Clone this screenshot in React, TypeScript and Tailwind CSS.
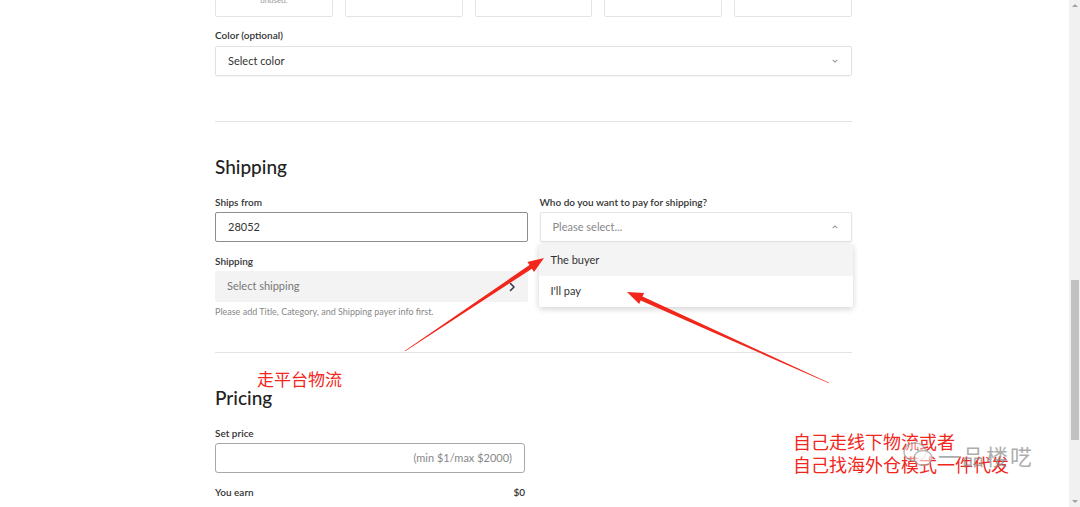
import React from 'react';

const UI_FONT = "font-['Lato','Noto_Sans',sans-serif]";

function ChevronDown() {
  return (
    <svg className="h-[8px] w-[8px] text-[#9a9a9a]" viewBox="0 0 10 10" fill="none" stroke="currentColor" strokeWidth={1.3}>
      <path d="M2.5 4l2.5 2.5L7.5 4" strokeLinecap="round" strokeLinejoin="round" />
    </svg>
  );
}

function ChevronUp() {
  return (
    <svg className="h-[8px] w-[8px] text-[#9a9a9a]" viewBox="0 0 10 10" fill="none" stroke="currentColor" strokeWidth={1.3}>
      <path d="M2.5 6l2.5-2.5L7.5 6" strokeLinecap="round" strokeLinejoin="round" />
    </svg>
  );
}

function ChevronRight() {
  return (
    <svg className="h-[12px] w-[12px] text-[#3b3b4f]" viewBox="0 0 12 12" fill="none" stroke="currentColor" strokeWidth={1.6}>
      <path d="M4.5 2.5L8 6l-3.5 3.5" strokeLinecap="round" strokeLinejoin="round" />
    </svg>
  );
}

// Tapered red arrow like the ones drawn on screenshots.
function Arrow({ x1, y1, x2, y2 }: { x1: number; y1: number; x2: number; y2: number }) {
  const dx = x2 - x1;
  const dy = y2 - y1;
  const len = Math.hypot(dx, dy);
  const ux = dx / len;
  const uy = dy / len;
  const nx = -uy;
  const ny = ux;
  const headLen = 16;
  const headW = 6;
  const shaftW = 2.2;
  const bx = x2 - ux * headLen;
  const by = y2 - uy * headLen;
  const pts = [
    [x1 + nx * 0.3, y1 + ny * 0.3],
    [bx + nx * shaftW, by + ny * shaftW],
    [bx + nx * headW, by + ny * headW],
    [x2, y2],
    [bx - nx * headW, by - ny * headW],
    [bx - nx * shaftW, by - ny * shaftW],
    [x1 - nx * 0.3, y1 - ny * 0.3],
  ]
    .map((p) => p.join(','))
    .join(' ');
  return <polygon points={pts} fill="#f2271c" />;
}

export default function App() {
  return (
    <div className={`relative flex h-[507px] w-[1080px] overflow-hidden bg-white ${UI_FONT}`}>
      {/* Page content */}
      <div className="flex flex-1 justify-center pr-[2px]">
        <div className="flex w-[637px] flex-col">
          {/* Photo slots (cut off at the top) */}
          <div className="mt-[-21px] grid grid-cols-5 gap-3">
            {[0, 1, 2, 3, 4].map((i) => (
              <div key={i} className="flex h-[38px] items-start justify-center rounded-[2px] border border-[#e4e4e4] pt-[16px]">
                {i === 0 && <span className="text-[8px] leading-[8px] text-[#9a9a9a]">unused.</span>}
              </div>
            ))}
          </div>

          <div className="mt-[11px] text-[10px] font-semibold leading-[14px] text-[#333]">Color (optional)</div>
          <div className="mt-[4px] flex h-[30px] items-center justify-between rounded-[2px] border border-[#e2e2e2] px-3 shadow-[0_1px_2px_rgba(0,0,0,0.04)]">
            <span className="text-[11px] text-[#333]">Select color</span>
            <ChevronDown />
          </div>

          <div className="mt-[45px] border-t border-[#e3e3e3]" />

          {/* Shipping */}
          <h2 className="mt-[33px] text-[19px] font-medium leading-[24px] text-[#222]">Shipping</h2>
          <div className="mt-[16px] grid grid-cols-2 gap-3">
            <div className="flex flex-col">
              <div className="text-[10px] font-semibold leading-[14px] text-[#333]">Ships from</div>
              <div className="mt-[3px] flex h-[30px] items-center rounded-[2px] border border-[#8e8e8e] px-3 text-[11px] text-[#333]">
                28052
              </div>
              <div className="mt-[12px] text-[10px] font-semibold leading-[14px] text-[#333]">Shipping</div>
              <div className="mt-[3px] flex h-[31px] items-center justify-between rounded-[2px] bg-[#f3f3f3] pl-3 pr-[10px]">
                <span className="text-[11px] text-[#777]">Select shipping</span>
                <ChevronRight />
              </div>
              <div className="mt-[4px] text-[9px] leading-[12px] text-[#888]">
                Please add Title, Category, and Shipping payer info first.
              </div>
            </div>
            <div className="relative flex flex-col">
              <div className="text-[10px] font-semibold leading-[14px] text-[#333]">Who do you want to pay for shipping?</div>
              <div className="mt-[3px] flex h-[30px] items-center justify-between rounded-[2px] border border-[#e4e4e4] px-3 shadow-[0_1px_2px_rgba(0,0,0,0.05)]">
                <span className="text-[11px] text-[#888]">Please select...</span>
                <ChevronUp />
              </div>
              {/* Open dropdown menu */}
              <div className="absolute left-[-1px] right-[-1px] top-[49px] z-10 flex flex-col rounded-[2px] bg-white shadow-[0_2px_6px_rgba(0,0,0,0.18)]">
                <div className="flex h-[32px] items-center bg-[#f4f4f4] px-3 text-[11px] text-[#333]">The buyer</div>
                <div className="flex h-[31px] items-center px-3 text-[11px] text-[#333]">I'll pay</div>
              </div>
            </div>
          </div>

          <div className="mt-[34px] border-t border-[#e3e3e3]" />

          {/* Pricing */}
          <h2 className="mt-[33px] text-[19px] font-medium leading-[24px] text-[#222]">Pricing</h2>
          <div className="mt-[16px] text-[10px] font-semibold leading-[14px] text-[#333]">Set price</div>
          <div className="mt-[3px] flex h-[30px] w-[310px] items-center justify-end rounded-[3px] border border-[#a8a8a8] px-3">
            <span className="text-[11px] text-[#888]">(min $1/max $2000)</span>
          </div>
          <div className="mt-[12px] flex w-[310px] items-center justify-between text-[10px] font-semibold leading-[14px] text-[#333]">
            <span>You earn</span>
            <span>$0</span>
          </div>
        </div>
      </div>

      {/* Scrollbar */}
      <div className="flex w-[11px] flex-col items-center bg-[#f1f1f1]">
        <div className="flex h-[11px] items-center justify-center">
          <div className="h-0 w-0 border-x-[3px] border-b-[3px] border-x-transparent border-b-[#a3a3a3]" />
        </div>
        <div className="mt-[269px] h-[160px] w-[8px] bg-[#c1c1c1]" />
        <div className="flex-1" />
        <div className="flex h-[11px] items-center justify-center">
          <div className="h-0 w-0 border-x-[3px] border-t-[3px] border-x-transparent border-t-[#a3a3a3]" />
        </div>
      </div>

      {/* Screenshot annotations */}
      <svg className="pointer-events-none absolute left-0 top-0 z-20" width={1080} height={507}>
        <Arrow x1={405} y1={351} x2={544} y2={258} />
        <Arrow x1={829} y1={383} x2={627} y2={292} />
      </svg>
      <div className="absolute left-[257px] top-[368px] z-20 font-['Noto_Sans_CJK_SC',sans-serif] text-[17px] leading-[22px] text-[#f2271c]">
        走平台物流
      </div>
      <div className="absolute left-[793px] top-[430px] z-20 font-['Noto_Sans_CJK_SC',sans-serif] text-[18px] leading-[23px] text-[#f2271c]">
        <div>自己走线下物流或者</div>
        <div>自己找海外仓模式一件代发</div>
      </div>

      {/* Watermark */}
      <div className="absolute left-[902px] top-[440px] z-30 flex items-center gap-[2px] opacity-70">
        <svg width={34} height={30} viewBox="0 0 34 30" fill="none" stroke="#9a9a9a" strokeWidth={1.4}>
          <ellipse cx={13} cy={12} rx={11} ry={9} fill="rgba(255,255,255,0.6)" />
          <ellipse cx={21} cy={18} rx={9} ry={7.5} fill="rgba(255,255,255,0.8)" />
          <circle cx={9} cy={10} r={1.2} fill="#9a9a9a" stroke="none" />
          <circle cx={16} cy={10} r={1.2} fill="#9a9a9a" stroke="none" />
        </svg>
        <span className="font-['Noto_Sans_CJK_SC',sans-serif] text-[22px] leading-[26px] tracking-[2px] text-[#8a8a8a]">一品楼呓</span>
      </div>
    </div>
  );
}
